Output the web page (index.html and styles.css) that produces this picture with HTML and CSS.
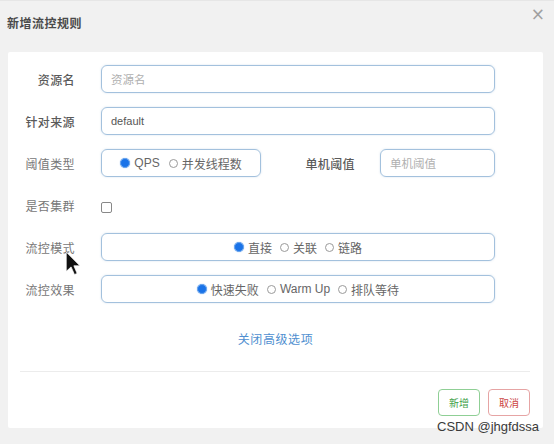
FILE: index.html
```html
<!DOCTYPE html>
<html lang="zh">
<head>
<meta charset="utf-8">
<title>新增流控规则</title>
<link rel="stylesheet" href="styles.css">
</head>
<body>
<div class="dialog">
  <div class="header">
    <span class="title">新增流控规则</span>
    <span class="close">×</span>
  </div>
  <div class="card">
    <div class="form">
      <div class="row">
        <label class="lbl strong">资源名</label>
        <div class="field"><div class="input placeholder">资源名</div></div>
      </div>
      <div class="row">
        <label class="lbl strong">针对来源</label>
        <div class="field"><div class="input">default</div></div>
      </div>
      <div class="row">
        <label class="lbl">阈值类型</label>
        <div class="field split">
          <div class="box small">
            <span class="opt"><span class="radio on"></span>QPS</span>
            <span class="opt"><span class="radio"></span>并发线程数</span>
          </div>
          <label class="lbl strong inner">单机阈值</label>
          <div class="input narrow placeholder">单机阈值</div>
        </div>
      </div>
      <div class="row">
        <label class="lbl">是否集群</label>
        <div class="field"><span class="check"></span></div>
      </div>
      <div class="row">
        <label class="lbl">流控模式</label>
        <div class="field">
          <div class="box">
            <span class="opt"><span class="radio on"></span>直接</span>
            <span class="opt"><span class="radio"></span>关联</span>
            <span class="opt"><span class="radio"></span>链路</span>
          </div>
        </div>
      </div>
      <div class="row">
        <label class="lbl">流控效果</label>
        <div class="field">
          <div class="box">
            <span class="opt"><span class="radio on"></span>快速失败</span>
            <span class="opt"><span class="radio"></span>Warm Up</span>
            <span class="opt"><span class="radio"></span>排队等待</span>
          </div>
        </div>
      </div>
    </div>
    <div class="more"><a class="link">关闭高级选项</a></div>
    <div class="sep"></div>
    <div class="actions">
      <button class="btn ok">新增</button>
      <button class="btn cancel">取消</button>
    </div>
  </div>
  <div class="watermark">CSDN @jhgfdssa</div>
  <svg class="cursor" width="15" height="23" viewBox="0 0 12 19">
    <path d="M0 0 V16 L4 12.3 L6.8 18.6 L9 17.7 L6.3 11.4 H11.3 Z" fill="#111" stroke="#fff" stroke-width="0.6"/>
  </svg>
</div>
</body>
</html>
```

FILE: styles.css
```css
html, body {
  margin: 0;
  padding: 0;
}
body {
  background: #f1f1f1;
  font-family: "Liberation Sans", "Noto Sans CJK SC", sans-serif;
  width: 554px;
  height: 444px;
  overflow: hidden;
}
.dialog {
  position: relative;
  height: 444px;
  border-top: 1px solid #e6e6e6;
  box-sizing: border-box;
}
.header {
  height: 51px;
  display: flex;
  align-items: flex-start;
  padding: 14px 0 0 7px;
  box-sizing: border-box;
}
.title {
  font-family: "Noto Sans CJK SC", sans-serif;
  font-weight: bold;
  font-size: 12px;
  letter-spacing: 0.5px;
  color: #4a4a4a;
  line-height: 16px;
}
.close {
  position: absolute;
  right: 9px;
  top: 3px;
  font-size: 17px;
  color: #a0a0a0;
  font-family: "DejaVu Sans", sans-serif;
}
.card {
  background: #fff;
  margin: 0 11px 0 8px;
  height: 376px;
  box-sizing: border-box;
  padding: 13px 0 12px;
  border-radius: 2px;
  display: flex;
  flex-direction: column;
}
.form {
  display: flex;
  flex-direction: column;
  gap: 14px;
  padding-right: 48px;
}
.row {
  display: grid;
  grid-template-columns: 67px 1fr;
  column-gap: 26px;
  height: 28px;
  align-items: center;
}
.lbl {
  font-family: "Noto Sans CJK SC", sans-serif;
  font-size: 12px;
  color: #777;
  text-align: right;
  font-weight: 400;
  letter-spacing: 0.4px;
}
.lbl.strong {
  color: #5a5a5a;
  font-weight: 500;
}
.field {
  display: flex;
  align-items: center;
  height: 28px;
}
.input {
  flex: 1;
  height: 28px;
  box-sizing: border-box;
  border: 1.5px solid #a3c1dd;
  border-radius: 6px;
  box-shadow: 0 0 2px rgba(120, 160, 200, 0.35);
  padding-left: 9px;
  display: flex;
  align-items: center;
  font-size: 11px;
  color: #555;
}
.input.placeholder {
  color: #b0b0b0;
  font-family: "Noto Sans CJK SC", sans-serif;
  font-size: 11.5px;
}
.input.narrow {
  flex: 0 0 115px;
}
.split .inner {
  flex: 1;
  padding-right: 25px;
  font-size: 12px;
}
.box {
  flex: 1;
  height: 28px;
  box-sizing: border-box;
  border: 1.5px solid #a3c1dd;
  border-radius: 6px;
  box-shadow: 0 0 2px rgba(120, 160, 200, 0.35);
  display: flex;
  align-items: center;
  justify-content: center;
  gap: 8px;
}
.box.small {
  flex: 0 0 160px;
  gap: 9px;
}
.opt {
  display: inline-flex;
  align-items: center;
  font-size: 12px;
  color: #666;
  gap: 4px;
}
.radio {
  width: 9px;
  height: 9px;
  border-radius: 50%;
  border: 1px solid #9a9a9a;
  box-sizing: border-box;
  display: inline-block;
  background: #fff;
}
.radio.on {
  width: 10px;
  height: 10px;
  border: 1px solid #6ea8ee;
  background: #1a73e8;
  box-shadow: 0 0 1px #5d9cec;
}
.check {
  width: 11px;
  height: 11px;
  border: 1px solid #888;
  border-radius: 2px;
  box-sizing: border-box;
  margin-top: 4px;
}
.more {
  margin-top: 27px;
  text-align: center;
  line-height: 18px;
}
.link {
  font-family: "Noto Sans CJK SC", sans-serif;
  font-size: 12px;
  letter-spacing: 0.6px;
  color: #4f8fd0;
}
.sep {
  margin: 23px 13px 0 12px;
  height: 1px;
  background: #ececec;
}
.actions {
  display: flex;
  justify-content: flex-end;
  gap: 8px;
  margin: 17px 13px 0 0;
}
.btn {
  width: 42px;
  height: 27px;
  border-radius: 4px;
  background: #fff;
  font-family: "Noto Sans CJK SC", sans-serif;
  font-size: 10px;
  padding: 0;
}
.btn.ok {
  border: 1.5px solid #8fcf95;
  color: #3f9f4a;
}
.btn.cancel {
  border: 1.5px solid #e6a4a4;
  color: #cc4444;
}
.watermark {
  position: absolute;
  left: 437px;
  top: 418px;
  font-family: "Liberation Sans", sans-serif;
  font-size: 13px;
  color: #3a3a3a;
}
.cursor {
  position: absolute;
  left: 66px;
  top: 251px;
}
```
